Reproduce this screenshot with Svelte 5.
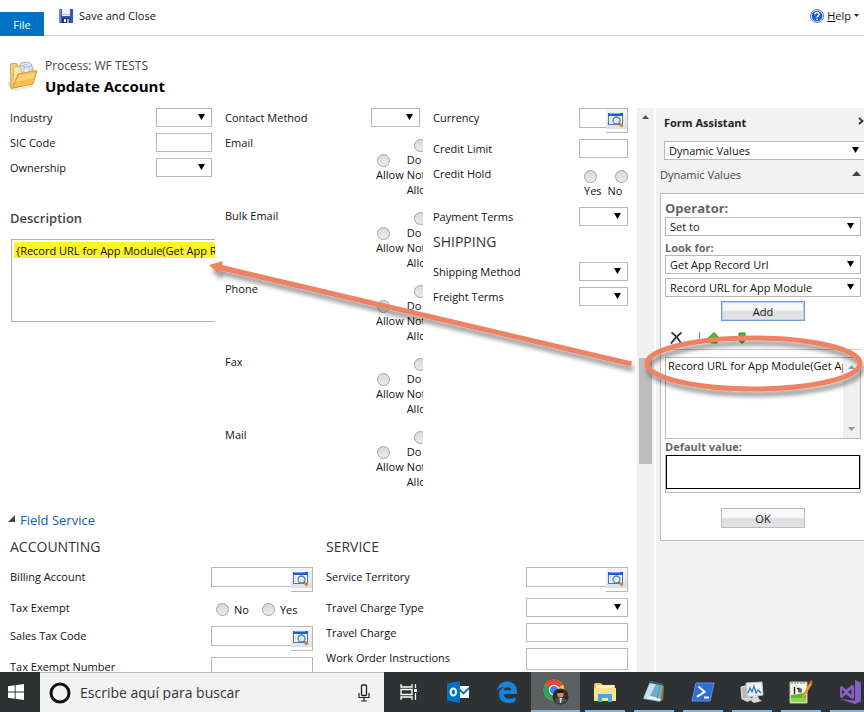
<script>
  const profile = [
    { id: 'industry', label: 'Industry', type: 'select' },
    { id: 'sic', label: 'SIC Code', type: 'text' },
    { id: 'ownership', label: 'Ownership', type: 'select' },
  ];
  const channels = ['Email', 'Bulk Email', 'Phone', 'Fax', 'Mail'];
  const service = [
    { id: 'charge-type', label: 'Travel Charge Type', type: 'select' },
    { id: 'charge', label: 'Travel Charge', type: 'text' },
    { id: 'instructions', label: 'Work Order Instructions', type: 'tall' },
  ];
  const apps = ['Task View', 'Outlook', 'Edge', 'Chrome', 'File Explorer', 'Notepad', 'PowerShell', 'Performance Monitor', 'Editor', 'Visual Studio'];
</script>

{#snippet select(id, value)}
  <span class="select">
    <select {id}><option>{value}</option></select>
  </span>
{/snippet}

{#snippet lookup(id)}
  <span class="lookup">
    <input type="text" {id} />
    <button type="button" aria-label="Look up">
      <svg width="16" height="16" viewBox="0 0 16 16">
        <rect x=".5" y="1.500" width="14" height="11" fill="#f4f8fc" stroke="#4b74b8" />
        <rect x="0" y="1" width="15" height="3" fill="#1b5fd0" />
        <path d="M1 1.500h11" stroke="#6ea4f2" />
        <path d="M2.500 5v6" stroke="#cfdcec" />
        <circle cx="8.500" cy="8.500" r="3.500" fill="#d9edf5" stroke="#5d7e90" stroke-width="1.300" />
        <path d="M11 11l1.500 1.500" stroke="#5d7e90" stroke-width="1.500" />
        <path d="M12 12l2.500 2.500" stroke="#d88a2b" stroke-width="3" />
      </svg>
    </button>
  </span>
{/snippet}

{#snippet field(item)}
  <div class="row">
    <label for={item.id}>{item.label}</label>
    {#if item.type === 'select'}
      {@render select(item.id, '')}
    {:else}
      <input class:tall={item.type === 'tall'} type="text" id={item.id} />
    {/if}
  </div>
{/snippet}

<div class="page">
  <header>
    <button class="file" type="button">File</button>
    <button class="command save" type="button">
      <svg width="14" height="14" viewBox="0 0 14 14">
        <path d="M0 0h14v14H1l-1-1z" fill="#3a55b8" />
        <path d="M0 0h2v13H0z" fill="#6f86d8" />
        <rect x="3" y="0" width="8" height="7" fill="#eef2fb" />
        <path d="M3 5.500h8" stroke="#b9c6e6" />
        <rect x="3" y="9" width="8" height="5" fill="#28306a" />
        <rect x="5" y="10" width="2" height="3" fill="#fff" />
        <rect x="8" y="10" width="2" height="4" fill="#a9b4c8" />
      </svg>
      Save and Close
    </button>
    <button class="command help" type="button">
      <svg width="14" height="14" viewBox="0 0 14 14">
        <circle cx="7" cy="7" r="6.500" fill="#dfe9fa" stroke="#5a7fc0" />
        <circle cx="7" cy="7" r="5.300" fill="#1f5fd6" />
        <path d="M5 5.500c0-2.600 4.200-2.500 4.200-.2C9.200 6.800 7.100 6.800 7.100 8.500" fill="none" stroke="#fff" stroke-width="1.500" />
        <circle cx="7.100" cy="10.300" r=".9" fill="#fff" />
      </svg>
      <span><u>H</u>elp</span>
      <svg width="5" height="3" viewBox="0 0 5 3"><path d="M0 0h5L2.500 3z" fill="#222" /></svg>
    </button>
  </header>

  <div class="title">
    <svg width="32" height="32" viewBox="0 0 32 32">
      <path d="M0 23l6-3v10H5z" fill="#c9c9c9" opacity=".7" />
      <path d="M12 8l2-5 7-1 3 2 2 5v8H12z" fill="#e9eff6" stroke="#98aec6" />
      <path d="M15 6l6-2M14 9l9-3" stroke="#a9bdd4" />
      <path d="M3.500 5l1-1.500h5L11 6v20l-7 2.500z" fill="#f5d27f" stroke="#d4a03c" />
      <path d="M6.500 7l8-1 1 3v17L6 28z" fill="#fae6a8" stroke="#dcb050" />
      <path d="M14 6h3v6h-3zM22 6h3v6h-3z" fill="#dfe6ee" stroke="#a4b4c6" stroke-width=".7" />
      <path d="M11 14l19-3.500L26 24 5.500 28z" fill="#f6bf4f" stroke="#d79a2e" />
      <path d="M12 15.500l16-3-2 6-16 3z" fill="#fbd883" opacity=".8" />
      <path d="M6 29l20-4v2L8 31z" fill="#d9d9d9" opacity=".6" />
    </svg>
    <div>
      <p>Process: WF TESTS</p>
      <h1>Update Account</h1>
    </div>
  </div>

  <div class="workspace">
    <main>
      <div class="top">
        <section class="profile">
          {#each profile as item}{@render field(item)}{/each}
          <h2 class="desc-title"><label for="description">Description</label></h2>
          <textarea id="description" class="description" readonly wrap="off" value={'{Record URL for App Module(Get App Record Url)}'}></textarea>
        </section>

        <section class="contact">
          <div class="row method">
            <label for="method">Contact Method</label>
            {@render select('method', '')}
          </div>
          {#each channels as name}
            <div class="channel" role="radiogroup" aria-label={name}>
              <span>{name}</span>
              <div class="options">
                <label class="allow"><input type="radio" {name} />Allow</label>
                <label><input type="radio" {name} /><span>Do<br />Not<br />Allow</span></label>
              </div>
            </div>
          {/each}
        </section>

        <section class="billing">
          <div class="row"><label for="currency">Currency</label>{@render lookup('currency')}</div>
          {@render field({ id: 'limit', label: 'Credit Limit', type: 'text' })}
          <div class="row hold" role="radiogroup" aria-label="Credit Hold">
            <span>Credit Hold</span>
            <div class="options">
              <label><input type="radio" name="hold" />Yes</label>
              <label><input type="radio" name="hold" />No</label>
            </div>
          </div>
          {@render field({ id: 'terms', label: 'Payment Terms', type: 'select' })}
          <h3>SHIPPING</h3>
          {@render field({ id: 'shipping', label: 'Shipping Method', type: 'select' })}
          {@render field({ id: 'freight', label: 'Freight Terms', type: 'select' })}
        </section>
      </div>

      <h2 class="group">
        <svg width="7" height="7" viewBox="0 0 7 7"><path d="M7 0v7H0z" fill="#444" /></svg>
        <a href="#field-service">Field Service</a>
      </h2>

      <div class="bottom">
        <section>
          <h3>ACCOUNTING</h3>
          <div class="row"><label for="account">Billing Account</label>{@render lookup('account')}</div>
          <div class="row exempt" role="radiogroup" aria-label="Tax Exempt">
            <span>Tax Exempt</span>
            <div class="options">
              <label><input type="radio" name="exempt" />No</label>
              <label><input type="radio" name="exempt" />Yes</label>
            </div>
          </div>
          <div class="row"><label for="tax-code">Sales Tax Code</label>{@render lookup('tax-code')}</div>
          {@render field({ id: 'tax-number', label: 'Tax Exempt Number', type: 'tall' })}
        </section>
        <section>
          <h3>SERVICE</h3>
          <div class="row"><label for="territory">Service Territory</label>{@render lookup('territory')}</div>
          {#each service as item}{@render field(item)}{/each}
        </section>
      </div>
    </main>

    <div class="scrollbar">
      <svg width="7" height="4" viewBox="0 0 7 4"><path d="M0 4h7L3.500 0z" fill="#505050" /></svg>
      <div class="thumb"></div>
    </div>

    <aside>
      <div class="assist-head">
        <h2>Form Assistant</h2>
        <svg width="6" height="8" viewBox="0 0 6 8"><path d="M1 1l3.500 3L1 7" fill="none" stroke="#333" stroke-width="1.800" /></svg>
      </div>
      <div class="mode">{@render select('mode', 'Dynamic Values')}</div>
      <div class="assist-sub">
        <label for="mode">Dynamic Values</label>
        <svg width="9" height="5" viewBox="0 0 9 5"><path d="M0 5h9L4.500 0z" fill="#444" /></svg>
      </div>
      <div class="card">
        <label class="big" for="operator">Operator:</label>
        {@render select('operator', 'Set to')}
        <label class="look" for="look">Look for:</label>
        <div class="stack">
          {@render select('look', 'Get App Record Url')}
          {@render select('attribute', 'Record URL for App Module')}
          <button class="push focus" type="button">Add</button>
        </div>
        <div class="tools">
          <button type="button" aria-label="Remove">
            <svg width="13" height="14" viewBox="0 0 13 14"><path d="M1.500 1.500C5 4 9 8.500 11 12.500M11.500 1.500C8 4 4 8 1 12.500" fill="none" stroke="#333" stroke-width="1.800" /></svg>
          </button>
          <i></i>
          <button type="button" aria-label="Move up">
            <svg width="12" height="12" viewBox="0 0 12 12"><path d="M6 .5L11.500 6H9v5H3V6H.5z" fill="#4bbf32" stroke="#2c8a1c" /></svg>
          </button>
          <button type="button" aria-label="Move down">
            <svg width="12" height="12" viewBox="0 0 12 12"><path d="M6 11.500L.5 6H3V1h6v5h2.500z" fill="#4bbf32" stroke="#2c8a1c" /></svg>
          </button>
        </div>
        <div class="list">
          <div class="item">Record URL for App Module(Get App Record Url)</div>
          <div class="bar">
            <svg width="7" height="4" viewBox="0 0 7 4"><path d="M0 4h7L3.500 0z" fill="#999" /></svg>
            <svg width="7" height="4" viewBox="0 0 7 4"><path d="M0 0h7L3.500 4z" fill="#999" /></svg>
          </div>
        </div>
        <label class="look default" for="default">Default value:</label>
        <div class="default-box"><textarea id="default"></textarea></div>
        <button class="push ok" type="button">OK</button>
      </div>
    </aside>
  </div>

  <footer>
    <button class="start" type="button" aria-label="Start">
      <svg width="16" height="16" viewBox="0 0 16 16"><path d="M0 2.300L6.700 1.300v6.200H0zM7.600 1.200L16 0v7.500H7.600zM0 8.500h6.700v6.200L0 13.700zM7.600 8.500H16V16l-8.400-1.200z" fill="#fff" /></svg>
    </button>
    <div class="search">
      <svg width="22" height="22" viewBox="0 0 22 22"><circle cx="11" cy="11" r="9" fill="none" stroke="#111" stroke-width="3" /></svg>
      <input type="text" aria-label="Buscar" placeholder="Escribe aquí para buscar" />
      <svg width="12" height="18" viewBox="0 0 12 18"><rect x="3.500" y="1" width="5" height="10.500" rx="1" fill="none" stroke="#222" stroke-width="1.300" /><path d="M1 9v4.500h10V9M6 13.500V17M3 17h6" fill="none" stroke="#222" stroke-width="1.200" /></svg>
    </div>
    <nav>
      {#each apps as app, i}
        <button type="button" aria-label={app} class:running={i > 2} class:active={i === 3}>
          {#if i === 0}
            <svg width="18" height="18" viewBox="0 0 18 18" fill="none" stroke="#fff" stroke-width="1.300"><path d="M1 1v3h11V1M1 17v-3h11v3M1 6.500h11v5H1zM15.500 1v4M15.500 10v7" /><path d="M14 6h3v3h-3z" fill="#fff" stroke="none" /></svg>
          {:else if i === 1}
            <svg width="22" height="22" viewBox="0 0 22 22"><path d="M11 5h11v12H11z" fill="#fff" /><path d="M12.500 8.500l4 4L22 7" fill="none" stroke="#0072c6" stroke-width="1.800" /><path d="M0 2.500L13 0v22L0 19.500z" fill="#0072c6" /><ellipse cx="6.300" cy="11" rx="2.700" ry="3.600" fill="none" stroke="#fff" stroke-width="2" /></svg>
          {:else if i === 2}
            <svg width="22" height="22" viewBox="0 0 22 22"><path d="M1 10C2 3.500 6 .5 11 .5c6 0 10 4 10 10V13H7.500c.3 3.500 3.500 5 6.800 4.800 2-.1 3.700-.7 5.200-1.500v4C17.500 21.400 15.500 22 13 22 7 22 3 18.500 3 13.500 3 10 5 7.500 8.500 6 5.500 6 3 7 1 10zM7.600 9.300h7.500C15 5.500 8.500 5.200 7.600 9.300z" fill="#1783dc" /></svg>
          {:else if i === 3}
            <svg width="26" height="26" viewBox="0 0 26 26"><circle cx="11" cy="11" r="10.500" fill="#f7c82f" /><path d="M11 11L1.900 5.800A10.500 10.500 0 0 1 20.100 5.800L18 7z" fill="#de4b3c" /><path d="M1.900 5.800A10.500 10.500 0 0 0 11 21.500l3.500-7L11 11z" fill="#2c9f5b" /><circle cx="11" cy="11" r="5.200" fill="#fff" /><circle cx="11" cy="11" r="4.200" fill="#4285f4" /><circle cx="17.500" cy="17.500" r="8" fill="#3a2a22" /><circle cx="17.500" cy="15.500" r="3.200" fill="#c68d6b" /><path d="M14 12.500c2-2 5-2 7 0l-1 1.500h-5z" fill="#211815" /><path d="M11.500 22c1-3 3-3.500 6-3.500s5 .5 6 3.500a8 8 0 0 1-12 0z" fill="#46535d" /><path d="M16.500 19h2.500l-1 5h-1z" fill="#e3ded8" /></svg>
          {:else if i === 4}
            <svg width="22" height="20" viewBox="0 0 22 20"><path d="M0 2.500L1 1h6l1.500 2H21v16H0z" fill="#eac45f" /><path d="M2 3h18v4H2z" fill="#fff1b5" /><path d="M0 6h22v13H0z" fill="#fbe198" /><path d="M4 20v-8h14v8h-4v-4H8v4z" fill="#3fa9e4" /></svg>
          {:else if i === 5}
            <svg width="24" height="24" viewBox="0 0 24 24"><path d="M20 5l2 1-1 14-4 2z" fill="#9d7130" /><path d="M8 1l13 3-3 18-17-3z" fill="#6fb0c4" /><path d="M8 3l6 1-7 14-5-1z" fill="#d7f0f5" opacity=".8" /><path d="M1 18l17 3 1-2L9 16z" fill="#e8f1f3" /><path d="M8 1l13 3-.5 1.500L7.500 3z" fill="#3f5c65" /><path d="M18 6l-3 13" stroke="#3f8499" opacity=".6" /></svg>
          {:else if i === 6}
            <svg width="24" height="20" viewBox="0 0 24 20"><path d="M5 1h18l-4 18H1z" fill="#2f6fd0" stroke="#5b93e4" /><path d="M7.500 4.500l6 5.300-7.500 5M13 15.500h5" fill="none" stroke="#fff" stroke-width="2.200" /></svg>
          {:else if i === 7}
            <svg width="24" height="22" viewBox="0 0 24 22"><path d="M1 6l8-2v13l-7 1z" fill="#b9b9b9" stroke="#eee" /><path d="M2 18l8-2 4 2-7 3z" fill="#d4d4d4" /><path d="M6 2l16-1 1 13-15 2z" fill="#eef4f8" stroke="#bcc4ca" /><path d="M8 12l2-5 2 4 2-6 2 7 2-3 3 3" fill="none" stroke="#2d76b9" stroke-width="1.200" /><path d="M13 15h5l1 3 3 2-8 2-3-2z" fill="#d6d9db" /></svg>
          {:else if i === 8}
            <svg width="24" height="24" viewBox="0 0 24 24"><path d="M1 2h17v21H1z" fill="#f5f8e8" stroke="#b7c2a0" /><path d="M2 15c5-1 10-1 15-3v10H2z" fill="#55b92d" /><path d="M2 18h15v4H2z" fill="#8bd947" /><path d="M3 1v3M6 1v3M9 1v3M12 1v3M15 1v3" stroke="#777" /><path d="M5.500 7v7M8 8.500h2v4M12 8.500v4" fill="none" stroke="#222" stroke-width="1.400" /><path d="M21 2l2 2-8 14-3 2 1-4z" fill="#e59b2c" /><path d="M20 2l2-2 2 2-1 2z" fill="#d84a3e" /></svg>
          {:else}
            <svg width="24" height="24" viewBox="0 0 24 24"><path d="M17 0l6 2.500v19L17 24 2 19l15 1.500V5zM2 7l2-1 4 3.500L14 5l2 1v12l-2 1-6-4.500L4 18l-2-1zM4 9.500v5L6.500 12zM13.500 9L10 12l3.500 3z" fill="#8661c5" fill-rule="evenodd" /></svg>
          {/if}
        </button>
      {/each}
    </nav>
  </footer>

  <svg class="annotation" width="864" height="712" viewBox="0 0 864 712" aria-hidden="true">
    <defs>
      <filter id="shade" x="-10%" y="-30%" width="120%" height="170%">
        <feDropShadow dx="2" dy="5" stdDeviation="2" flood-color="#000" flood-opacity=".4" />
      </filter>
    </defs>
    <g filter="url(#shade)">
      <path d="M209 265L223 261 222 265 632 361.500 631 366.500 221 270.500 219 274z" fill="#ee8262" />
      <ellipse cx="753.500" cy="363.500" rx="106.500" ry="25.500" fill="none" stroke="#ee8262" stroke-width="5" />
    </g>
  </svg>
</div>

<style>
  :global(body) { margin: 0; background: #fff; }
  .page {
    position: relative;
    display: flex;
    flex-direction: column;
    height: 100vh;
    overflow: hidden;
    font: 11px/15px "Open Sans", "Noto Sans", sans-serif;
    color: #111;
  }
  .page :is(h1, h2, h3, p) { margin: 0; }
  .page :is(button, input, select, textarea) { box-sizing: border-box; font: inherit; color: inherit; margin: 0; border-radius: 0; outline: 0; }
  button { padding: 0; border: 0; background: none; }
  svg { display: block; flex: none; }

  header { display: flex; height: 35px; border-bottom: 1px solid #d4d4d4; }
  .page .file { width: 44px; height: 24px; margin-top: 12px; background: #0072c6; color: #fff; }
  .command { display: flex; align-items: center; gap: 6px; height: 31px; }
  .page .save { margin-left: 15px; }
  .page .help { margin-left: auto; margin-right: 5px; gap: 3px; }

  .title { display: flex; gap: 6px; height: 52px; padding: 20px 7px 0; }
  .title svg { margin-top: 4px; }
  .title p { font-size: 12px; line-height: 20px; color: #444; }
  .title h1 { font-size: 15px; line-height: 20px; color: #000; }

  .workspace { display: flex; flex: 1; min-height: 0; }
  main { flex: 1; min-width: 0; overflow: hidden; padding: 0 9px 0 10px; }
  .top { display: grid; grid-template-columns: 215fr 208fr 195fr; }
  .bottom { display: grid; grid-template-columns: 303fr 302fr; column-gap: 13px; }
  .row { display: flex; justify-content: space-between; margin-bottom: 6px; line-height: 19px; }
  .profile .row, .method { padding-right: 13px; }
  main input[type='text'] { width: 49px; height: 19px; border: 1px solid #b8b8b8; background: #fff; }
  main .select { width: 49px; }
  .profile .row .select, .profile input[type='text'] { width: 56px; }
  .bottom .select, .bottom input[type='text'] { width: 102px; }
  .bottom input.tall { height: 22px; }

  .select { position: relative; display: block; height: 19px; }
  .select::after { content: ''; position: absolute; right: 7px; top: 6px; width: 7px; height: 6px; background: #000; clip-path: polygon(0 0, 100% 0, 50% 100%); pointer-events: none; }
  .select select { display: block; width: 100%; height: 19px; padding: 0 4px; border: 1px solid #b8b8b8; background: #fff; appearance: none; }

  .lookup { display: flex; height: 25px; width: 49px; }
  .bottom .lookup { width: 102px; }
  main .lookup input[type='text'] { flex: 1; width: auto; min-width: 0; height: 20px; border-right: 0; }
  .lookup button { display: flex; justify-content: center; width: 22px; height: 25px; padding: 3px 2px 0 0; border: 1px solid #b8b8b8; border-left: 0; background: linear-gradient(#f6f6f8, #dfe1e8) 0 0 / 100% 20px no-repeat; }

  .page input[type='radio'] { appearance: none; flex: none; width: 13px; height: 13px; border: 1px solid #a3a3a3; border-radius: 50%; background: linear-gradient(#d9d9d9, #ececec); }

  .page h2 { font-size: 13px; line-height: 20px; font-weight: 600; color: #444; }
  .page h3 { margin-bottom: 10px; font-size: 14px; line-height: 20px; font-weight: 400; color: #333; }
  .page .desc-title { margin: 31px 0 11px; }
  .page .description { display: block; width: calc(100% - 11px); height: 83px; margin-left: 1px; padding: 3px 0 0 4px; border: 1px solid #b0b0b0; border-right: 0; background: linear-gradient(#fff32a, #fff32a) 2px 2px / 100% 16px no-repeat; resize: none; overflow: hidden; white-space: pre; }

  .channel { display: flex; justify-content: space-between; height: 73px; padding-right: 10px; line-height: 19px; }
  .channel .options { display: flex; align-items: center; gap: 3px; box-sizing: border-box; width: 52px; height: 69px; padding-left: 5px; overflow: hidden; line-height: 15px; }
  .channel label { display: flex; flex: none; flex-direction: column; align-items: center; }
  .channel .allow { align-items: flex-start; }
  .page .allow input { margin-left: 1px; }

  .hold { height: 37px; }
  .hold .options { display: flex; gap: 6px; width: 44px; padding-top: 6px; line-height: 15px; }
  .hold label { display: flex; flex-direction: column; }
  .hold label:last-child { flex: 1; }
  .page .hold label:last-child input { align-self: flex-end; }

  .page .group { display: flex; gap: 5px; margin: 12px 0 7px -2px; font-weight: 400; }
  .group svg { margin-top: 5px; }
  .group a { color: #1160b7; text-decoration: none; }
  .exempt { height: 22px; }
  .exempt .options { display: flex; gap: 13px; box-sizing: border-box; width: 102px; padding-left: 5px; }
  .exempt label { display: flex; align-items: center; gap: 5px; }

  .scrollbar { box-sizing: border-box; width: 17px; padding: 7px 2px 0; background: #f0f0f0; }
  .scrollbar svg { margin: 0 auto; }
  .thumb { height: 106px; margin-top: 239px; background: #bdbdbd; }

  aside { width: 208px; margin-left: 2px; background: #f2f2f2; overflow: hidden; }
  .assist-head { display: flex; align-items: center; justify-content: space-between; box-sizing: border-box; height: 33px; padding: 0 0 4px 8px; }
  .page .assist-head h2 { font-size: 11px; font-weight: 700; color: #222; }
  .assist-head svg { margin-bottom: 4px; }
  .mode { margin-right: -2px; padding-left: 8px; }
  .assist-sub { display: flex; align-items: center; justify-content: space-between; height: 33px; padding: 0 3px 0 4px; color: #444; }
  .assist-sub label { padding-bottom: 4px; }
  .assist-sub svg { margin-bottom: 6px; }
  .card { display: flex; flex-direction: column; margin-left: 4px; padding: 5px 3px 12px 4px; border: 1px solid #bdbdbd; border-right: 0; background: #fff; }
  .big { font-size: 13px; line-height: 18px; font-weight: 700; color: #666; }
  .look { margin-top: 4px; font-weight: 700; color: #666; }
  .default { margin-top: 0; line-height: 16px; }
  .stack { display: flex; flex-direction: column; gap: 4px; }
  .page .push { align-self: center; width: 84px; height: 20px; border: 1px solid #b9bcc4; background: linear-gradient(#f8f8f8 45%, #dcdde0 55%, #e4e4e6); }
  .page .focus { border-color: #6c9ce6; box-shadow: inset 0 0 0 1px #b9d0f3; }
  .page .ok { margin-top: 15px; }
  .tools { display: flex; align-items: center; height: 29px; padding: 5px 0 0 5px; border-bottom: 1px solid #ccc; box-sizing: border-box; gap: 16px; }
  .tools i { width: 1px; height: 12px; margin-right: -8px; background: #888; }
  .list { display: flex; box-sizing: border-box; height: 82px; margin-top: 7px; border: 1px solid #b8b8b8; }
  .item { flex: 1; min-width: 0; padding-left: 2px; overflow: hidden; white-space: nowrap; }
  .bar { display: flex; flex-direction: column; justify-content: space-between; align-items: center; box-sizing: border-box; width: 17px; padding: 7px 0; background: #f0f0f0; }
  .default-box { padding-bottom: 3px; border: 1px solid #bbb; border-top: 0; }
  .default-box textarea { display: block; width: 100%; height: 34px; border: 1px solid #000; background: #fff; resize: none; }

  footer { display: flex; height: 40px; background: #2f3232; }
  .start { display: flex; align-items: center; justify-content: center; width: 40px; padding-right: 8px; }
  .search { display: flex; align-items: center; gap: 9px; box-sizing: border-box; width: 344px; padding: 0 14px 0 9px; border-top: 1px solid #bdbdbd; background: #f2f2f2; }
  .page .search input { flex: 1; min-width: 0; padding: 0; border: 0; background: none; font-size: 14px; }
  .search input::placeholder { color: #333; opacity: 1; }
  nav { display: flex; flex: 1; min-width: 0; overflow: hidden; }
  nav button { display: flex; flex: none; align-items: center; justify-content: center; box-sizing: border-box; width: 49px; }
  nav .running { background: linear-gradient(#76b9ed, #76b9ed) center bottom / 40px 2px no-repeat; }
  nav .active { background: linear-gradient(#76b9ed, #76b9ed) center bottom / 100% 2px no-repeat, #5c5e60; }

  .annotation { position: absolute; left: 0; top: 0; pointer-events: none; }
</style>
